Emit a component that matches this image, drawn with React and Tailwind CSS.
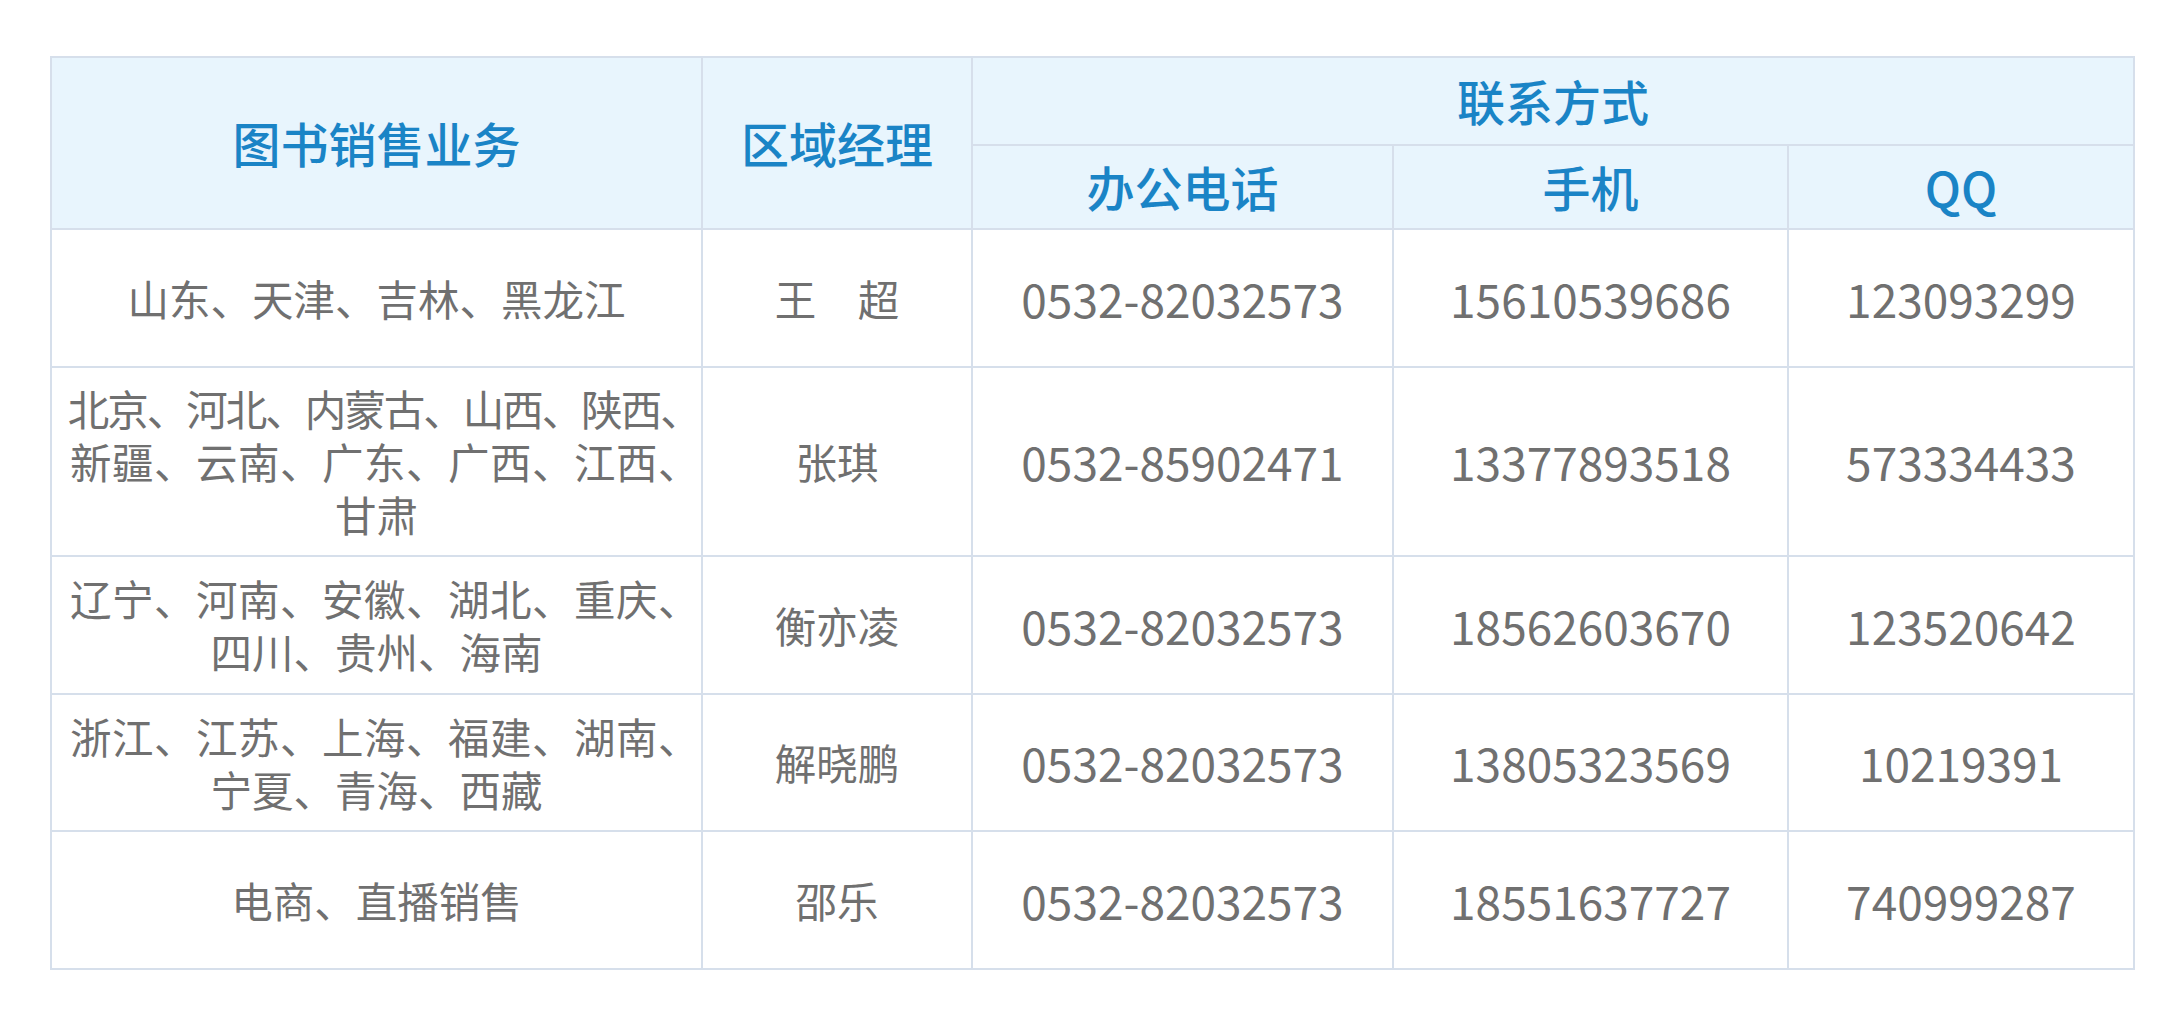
import React from "react";

const font = { fontFamily: '"Noto Sans CJK SC", "Noto Sans", sans-serif' };

const rows = [
  { area: [["山东、天津、吉林、黑龙江", "", ""]], name: "王　超", tel: "0532-82032573", mobile: "15610539686", qq: "123093299", h: "h-[138px]" },
  {
    area: [
      ["北京、河北、内蒙古、山西、陕西", "、", "tracking-[-2px]"],
      ["新疆、云南、广东、广西、江西", "、", "tracking-[0.5px]"],
      ["甘肃", "", ""],
    ],
    name: "张琪", tel: "0532-85902471", mobile: "13377893518", qq: "573334433", h: "h-[189px]",
  },
  {
    area: [
      ["辽宁、河南、安徽、湖北、重庆", "、", "tracking-[0.5px]"],
      ["四川、贵州、海南", "", ""],
    ],
    name: "衡亦凌", tel: "0532-82032573", mobile: "18562603670", qq: "123520642", h: "h-[138px]",
  },
  {
    area: [
      ["浙江、江苏、上海、福建、湖南", "、", "tracking-[0.5px]"],
      ["宁夏、青海、西藏", "", ""],
    ],
    name: "解晓鹏", tel: "0532-82032573", mobile: "13805323569", qq: "10219391", h: "h-[137px]",
  },
  { area: [["电商、直播销售", "", ""]], name: "邵乐", tel: "0532-82032573", mobile: "18551637727", qq: "740999287", h: "h-[138px]" },
];

const th = "border-2 border-[#d6dfeb] bg-[#e8f5fd] text-[#1a84c6] text-[48px] font-medium text-center align-middle p-0 leading-[1.2]";
const td = "border-2 border-[#d6dfeb] text-[#707070] text-center align-middle p-0";

export default function App() {
  return (
    <div className="w-[2181px] h-[1028px] bg-white pt-[56px] pl-[50px]" style={font}>
      <table className="table-fixed border-collapse w-[2083px]">
        <colgroup>
          <col className="w-[651px]" />
          <col className="w-[270px]" />
          <col className="w-[421px]" />
          <col className="w-[395px]" />
          <col className="w-[346px]" />
        </colgroup>
        <thead>
          <tr className="h-[88px]">
            <th rowSpan={2} className={th}>图书销售业务</th>
            <th rowSpan={2} className={th}>区域经理</th>
            <th colSpan={3} className={th}>联系方式</th>
          </tr>
          <tr className="h-[84px]">
            <th className={th}>办公电话</th>
            <th className={th}>手机</th>
            <th className={th}>QQ</th>
          </tr>
        </thead>
        <tbody>
          {rows.map((r, i) => (
            <tr key={i} className={r.h}>
              <td className={td + " text-[41.5px] leading-[53px]"}>
                {r.area.map(([text, tail, cls], j) => (
                  <div key={j} className={"whitespace-nowrap " + cls}>
                    {text}
                    {tail ? <span className="tracking-[-0.4em]">{tail}</span> : null}
                  </div>
                ))}
              </td>
              <td className={td + " text-[41.5px] leading-[53px] whitespace-pre"}>{r.name}</td>
              <td className={td + " text-[46px] leading-[53px]"}>{r.tel}</td>
              <td className={td + " text-[46px] leading-[53px]"}>{r.mobile}</td>
              <td className={td + " text-[46px] leading-[53px]"}>{r.qq}</td>
            </tr>
          ))}
        </tbody>
      </table>
    </div>
  );
}
